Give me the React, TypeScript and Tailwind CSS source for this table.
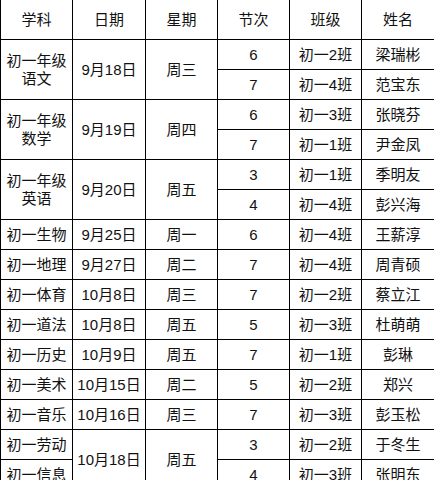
type Cell = { text: string; span?: boolean };

const header = ["学科", "日期", "星期", "节次", "班级", "姓名"];

// cells in reading order; span = covers two rows
const cells: Cell[] = [
  { text: "初一年级\n语文", span: true },
  { text: "9月18日", span: true },
  { text: "周三", span: true },
  { text: "6" },
  { text: "初一2班" },
  { text: "梁瑞彬" },
  { text: "7" },
  { text: "初一4班" },
  { text: "范宝东" },

  { text: "初一年级\n数学", span: true },
  { text: "9月19日", span: true },
  { text: "周四", span: true },
  { text: "6" },
  { text: "初一3班" },
  { text: "张晓芬" },
  { text: "7" },
  { text: "初一1班" },
  { text: "尹金凤" },

  { text: "初一年级\n英语", span: true },
  { text: "9月20日", span: true },
  { text: "周五", span: true },
  { text: "3" },
  { text: "初一1班" },
  { text: "季明友" },
  { text: "4" },
  { text: "初一4班" },
  { text: "彭兴海" },

  ...[
    ["初一生物", "9月25日", "周一", "6", "初一4班", "王薪淳"],
    ["初一地理", "9月27日", "周二", "7", "初一4班", "周青硕"],
    ["初一体育", "10月8日", "周三", "7", "初一2班", "蔡立江"],
    ["初一道法", "10月8日", "周五", "5", "初一3班", "杜萌萌"],
    ["初一历史", "10月9日", "周五", "7", "初一1班", "彭琳"],
    ["初一美术", "10月15日", "周二", "5", "初一2班", "郑兴"],
    ["初一音乐", "10月16日", "周三", "7", "初一3班", "彭玉松"],
  ].flat().map((text) => ({ text })),

  { text: "初一劳动" },
  { text: "10月18日", span: true },
  { text: "周五", span: true },
  { text: "3" },
  { text: "初一2班" },
  { text: "于冬生" },
  { text: "初一信息" },
  { text: "4" },
  { text: "初一3班" },
  { text: "张明东" },
];

export default function App() {
  return (
    <div
      className="h-[480px] w-[434px] overflow-hidden bg-white text-[15px] leading-[18px] text-[#111]"
      style={{ fontFamily: '"Liberation Sans", "Noto Sans CJK SC", sans-serif' }}
    >
      <div className="grid grid-cols-[72px_73px_72px_72px_72px_73px] grid-rows-[40px_repeat(15,30px)]">
        {header.map((h) => (
          <div key={h} className="flex items-center justify-center border-b border-l border-black">
            {h}
          </div>
        ))}
        {cells.map((c, i) => (
          <div
            key={i}
            className={
              "flex items-center justify-center whitespace-pre-line border-b border-l border-black text-center" +
              (c.span ? " row-span-2" : "")
            }
          >
            {c.text}
          </div>
        ))}
      </div>
    </div>
  );
}
